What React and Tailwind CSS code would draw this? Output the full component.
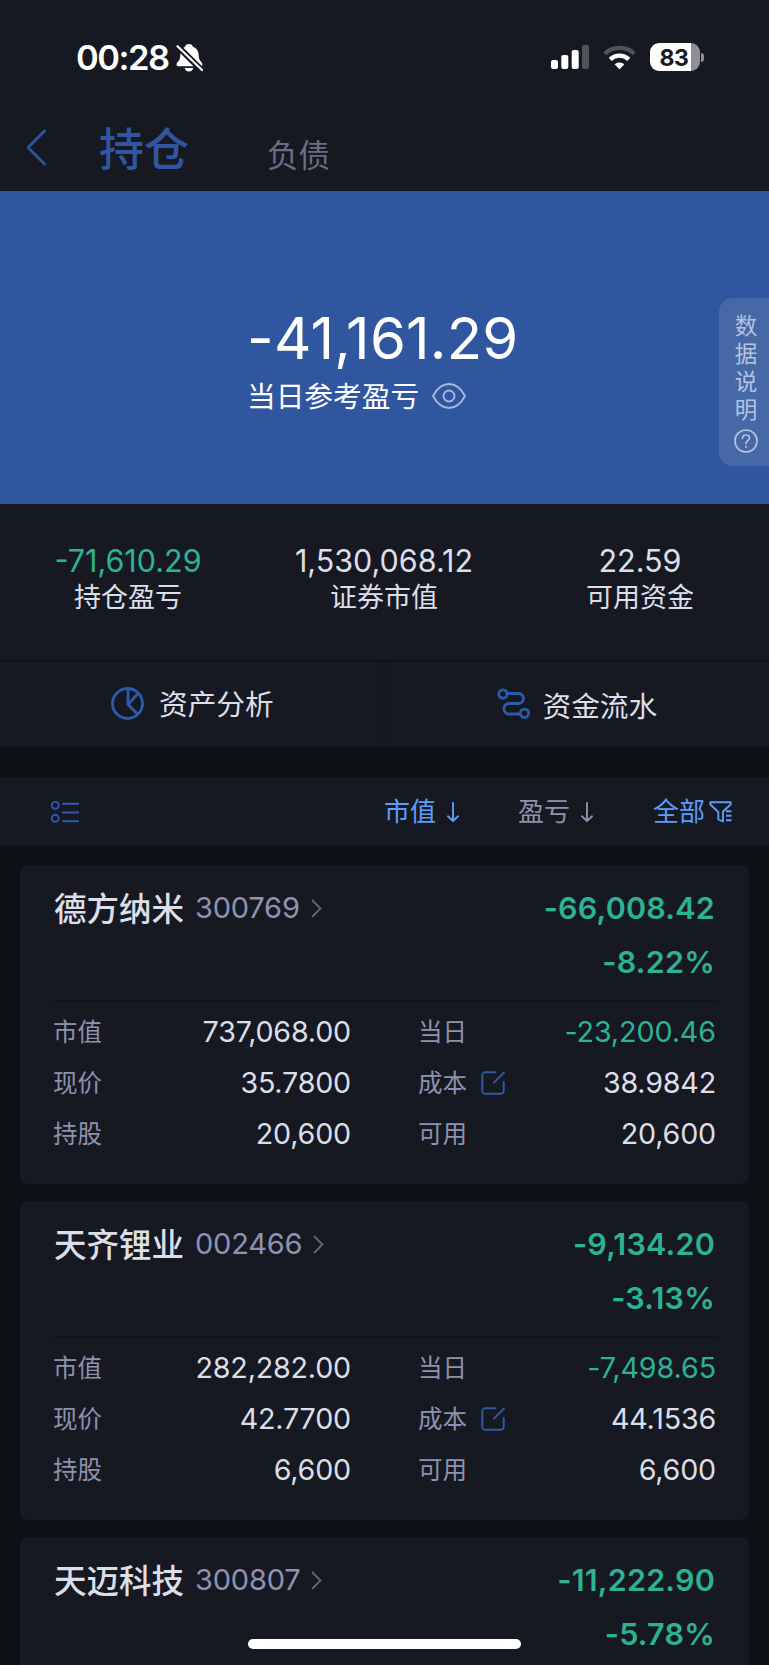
const summary = [
    { label: '持仓盈亏', value: '-71,610.29', down: true },
    { label: '证券市值', value: '1,530,068.12' },
    { label: '可用资金', value: '22.59' },
];

const holdings = [
    {
        name: '德方纳米', code: '300769', profit: '-66,008.42', rate: '-8.22%',
        details: { marketValue: '737,068.00', today: '-23,200.46', price: '35.7800', cost: '38.9842', shares: '20,600', usable: '20,600' },
    },
    {
        name: '天齐锂业', code: '002466', profit: '-9,134.20', rate: '-3.13%',
        details: { marketValue: '282,282.00', today: '-7,498.65', price: '42.7700', cost: '44.1536', shares: '6,600', usable: '6,600' },
    },
    { name: '天迈科技', code: '300807', profit: '-11,222.90', rate: '-5.78%' },
];

const StatusBar = () => (
    <div className="flex h-[104px] items-start pl-[76px] pr-[65px] pt-[43px] text-white">
        <span className="h-[28px] w-[93px] text-[34.5px] font-semibold leading-[29px] tracking-[-1.5px]">00:28</span>
        <svg className="ml-[7px] mt-px h-[28px] w-[27px]" viewBox="0 0 27 28" fill="currentColor">
            <path d="M13 0c2.200 0 3.700 1.300 4 2.800 3.700 1.200 5.500 4.300 5.700 8.500.1 3 .7 5 3 7.200.5.600.8 1.200.8 2 0 1.100-.8 1.700-2 1.700H2.500C1.300 22.200.5 21.600.5 20.500c0-.8.300-1.400.8-2 2.300-2.200 2.900-4.200 3-7.200.2-4.200 2-7.300 4.700-8.500C9.300 1.300 10.800 0 13 0ZM8.700 24h8.600c-.5 2.300-2.300 3.600-4.300 3.600S9.200 26.300 8.700 24Z" />
            <path d="M1.500 2.200 26 26.500" stroke="#161922" strokeWidth="6" />
            <path d="M1.500 2.200 26 26" stroke="currentColor" strokeWidth="2.200" strokeLinecap="round" />
        </svg>
        <svg className="ml-auto mt-[2px] h-[24px] w-[38px]" viewBox="0 0 38 24" fill="currentColor">
            <rect x="0" y="15" width="7" height="9" rx="2" />
            <rect x="10.300" y="10" width="7" height="14" rx="2" />
            <rect x="20.700" y="5" width="7" height="19" rx="2" />
            <rect x="31" y="0" width="7" height="24" rx="2" opacity="0.25" />
        </svg>
        <svg className="ml-[14px] mt-[2px] h-[25px] w-[33px]" viewBox="0 0 33 25" fill="none" stroke="currentColor" strokeWidth="4.300">
            <path d="M1.800 8.700a21.500 21.500 0 0 1 29.400 0" opacity="0.250" />
            <path d="M7.200 14.400a13.600 13.600 0 0 1 18.600 0" />
            <path d="M11.600 19.300a7.200 7.200 0 0 1 9.800 0L16.500 24.300Z" fill="currentColor" stroke="none" />
        </svg>
        <div className="ml-[14px] flex items-center">
            <div className="flex h-[28px] w-[50px] items-center justify-center rounded-[9px] bg-linear-to-r from-white from-[82%] to-[#8e9096] to-[82%]">
                <span className="mr-[2px] mt-px text-[23px] font-bold leading-[28px] tracking-[-0.3px] text-[#161922]">83</span>
            </div>
            <div className="ml-px h-[9px] w-[3px] rounded-r-full bg-[#8e9096]" />
        </div>
    </div>
);

const EditIcon = () => (
    <svg className="-mt-[2px] ml-[14px] h-[24px] w-[24px]" viewBox="0 0 24 24" fill="none" stroke="#30599f" strokeWidth="2" strokeLinecap="round">
        <path d="M14.500 1.300H4A2.700 2.700 0 0 0 1.300 4v16A2.700 2.700 0 0 0 4 22.700h16a2.700 2.700 0 0 0 2.700-2.700V11M23 1.500 13 11.500" />
    </svg>
);

const Field = ({ label, value, down, editable }) => (
    <div className="flex h-[51px] items-center">
        <span className="text-[24.5px] text-[#8f92ae]">{label}</span>
        {editable && <EditIcon />}
        <span className={`-mt-[2px] ml-auto text-[28.7px] ${down ? 'tracking-[-0.1px] text-[#2cb294]' : 'tracking-[-0.2px] text-[#dcdee8]'}`}>{value}</span>
    </div>
);

const HoldingCard = ({ item }) => (
    <div className="mx-[20px] mb-[17px] h-[319px] shrink-0 overflow-hidden rounded-[8px] bg-[#161922] px-[33px]">
        <div className="flex h-[137px] items-start border-b-2 border-[#10131a] pt-[18px]">
            <span className="ml-px mt-[2px] text-[32.5px] font-medium leading-[50px] text-[#dcdee8]">{item.name}</span>
            <span className="ml-[11px] text-[29px] leading-[50px] tracking-[-0.2px] text-[#8f92b2]">{item.code}</span>
            <svg className="ml-[11px] mt-[16px] h-[19px] w-[11px]" viewBox="0 0 11 19" fill="none" stroke="#62657f" strokeWidth="1.800">
                <path d="m1 1 8.500 8.500L1 18" />
            </svg>
            <div className="ml-auto mr-px text-right text-[30.5px] font-semibold tracking-[0.2px] text-[#2cb294]">
                <div className="leading-[50px]">{item.profit}</div>
                <div className="mt-[4px] leading-[50px]">{item.rate}</div>
            </div>
        </div>
        {item.details && (
            <div className="grid grid-cols-[298px_298px] justify-between pt-[5px]">
                <Field label="市值" value={item.details.marketValue} />
                <Field label="当日" value={item.details.today} down />
                <Field label="现价" value={item.details.price} />
                <Field label="成本" value={item.details.cost} editable />
                <Field label="持股" value={item.details.shares} />
                <Field label="可用" value={item.details.usable} />
            </div>
        )}
    </div>
);

const SortArrow = () => (
    <svg className="h-[20px] w-[12px]" viewBox="0 0 12 20" fill="none" stroke="currentColor" strokeWidth="1.900" strokeLinecap="round" strokeLinejoin="round">
        <path d="M6 1v18M1 14.300 6 19l5-4.700" />
    </svg>
);

export default function App() {
    return (
        <div className="relative flex h-[1665px] w-[769px] flex-col overflow-hidden bg-[#0d1014] font-['Inter','Noto_Sans_CJK_SC',sans-serif]">
            <header className="h-[191px] shrink-0 bg-[#161922]">
                <StatusBar />
                <div className="flex h-[87px] items-start">
                    <svg className="ml-[26px] mt-[25px] h-[37px] w-[20px]" viewBox="0 0 20 37" fill="none" stroke="#30569f" strokeWidth="2.600" strokeLinecap="round" strokeLinejoin="round">
                        <path d="M18.500 2 2 18.500l16.500 16.500" />
                    </svg>
                    <span className="ml-[53px] mt-[16px] text-[45px] font-medium leading-[60px] text-[#30569f]">持仓</span>
                    <span className="ml-[78px] mt-[32px] text-[31.5px] leading-[40px] text-[#686f83]">负债</span>
                </div>
            </header>

            <section className="flex h-[313px] shrink-0 justify-center bg-[#30569f] text-white">
                <div className="w-[275px] pt-[112px]">
                    <div className="text-[58px] leading-[70px] tracking-[0.2px]">-41,161.29</div>
                    <div className="mt-[4px] flex items-center">
                        <span className="text-[28.700px] leading-[40px]">当日参考盈亏</span>
                        <svg className="-mt-[2px] ml-[13px] h-[26px] w-[34px]" viewBox="0 0 34 26" fill="none" stroke="#a9bad9" strokeWidth="1.800">
                            <path d="M1 13C5 5.500 10.500 1 17 1s12 4.500 16 12c-4 7.500-9.500 12-16 12S5 20.500 1 13Z" strokeLinejoin="round" />
                            <circle cx="17" cy="13" r="5.500" />
                        </svg>
                    </div>
                </div>
            </section>

            {/* side tab floating over the banner */}
            <div className="absolute right-0 top-[298px] flex h-[168px] w-[50px] flex-col items-center rounded-l-[14px] bg-[#4668a6] pl-[4px] pt-[14px] text-[22.500px] leading-[28px] text-[#b5c3df]">
                <span>数</span>
                <span>据</span>
                <span>说</span>
                <span>明</span>
                <svg className="mt-[5px] h-[24px] w-[24px]" viewBox="0 0 24 24" fill="none" stroke="currentColor" strokeWidth="1.700" strokeLinecap="round">
                    <circle cx="12" cy="12" r="11" />
                    <path d="M8.500 9.300c0-2 1.500-3.300 3.500-3.300s3.500 1.300 3.500 3.100c0 2.300-3.500 2.600-3.500 5.400" />
                    <path d="M12 17.800v.2" strokeWidth="2" />
                </svg>
            </div>

            <section className="grid h-[158px] shrink-0 grid-cols-3 border-b-2 border-[#10131a] bg-[#161922] pr-px pt-[38px] text-center text-[#dcdee8]">
                {summary.map((s) => (
                    <div key={s.label}>
                        <div className={`text-[30.500px] leading-[38px] ${s.down ? 'text-[#2cb294]' : ''}`}>{s.value}</div>
                        <div className="text-[27px] leading-[36px]">{s.label}</div>
                    </div>
                ))}
            </section>

            <section className="grid h-[85px] shrink-0 grid-cols-2 bg-[#161922] text-[28.700px] text-[#dcdee8]">
                <div className="flex items-start border-r-2 border-[#12151c] pl-[111px] pt-[24px]">
                    <svg className="mt-px h-[33px] w-[33px]" viewBox="0 0 33 33" fill="none" stroke="#2e5aac" strokeWidth="2.800" strokeLinecap="round" strokeLinejoin="round">
                        <circle cx="16.500" cy="16.500" r="15" />
                        <path d="M17 2v15.500L27 6.500M17 17.500l9.500 9.500" />
                    </svg>
                    <span className="ml-[15px] mt-px leading-[36px]">资产分析</span>
                </div>
                <div className="flex items-start pl-[112px] pt-[26px]">
                    <svg className="h-[31px] w-[34px]" viewBox="0 0 34 31" fill="none" stroke="#2e5aac" strokeWidth="2.800" strokeLinecap="round">
                        <circle cx="6" cy="6" r="4.200" />
                        <circle cx="27.500" cy="25.300" r="4.200" />
                        <path d="M10.500 5.500H21.500a5 5 0 0 1 0 10H11.500a5.300 5.300 0 0 0 0 10.500H23" />
                    </svg>
                    <span className="ml-[12px] mt-px leading-[36px]">资金流水</span>
                </div>
            </section>

            <section className="mb-[19px] mt-[30px] flex h-[69px] shrink-0 items-center bg-[#161922] text-[26px] text-[#5c9dfc]">
                <svg className="ml-[51px] h-[22px] w-[28px]" viewBox="0 0 28 22" fill="none" stroke="#2e5aac" strokeWidth="1.900">
                    <circle cx="4.300" cy="4.300" r="3.500" />
                    <circle cx="4.300" cy="17.300" r="3.500" />
                    <path d="M11 2.700h17M11 11.500h17M11 20.200h17" />
                </svg>
                <div className="ml-[305px] flex items-center gap-[11px]">
                    <span>市值</span>
                    <SortArrow />
                </div>
                <div className="ml-[59px] flex items-center gap-[11px] text-[#8f92ae]">
                    <span>盈亏</span>
                    <SortArrow />
                </div>
                <div className="ml-[60px] flex items-center gap-[4px]">
                    <span>全部</span>
                    <svg className="h-[22px] w-[23px]" viewBox="0 0 23 22" fill="none" stroke="currentColor" strokeWidth="1.900" strokeLinejoin="round">
                        <path d="M14 20.500 9.300 18.500V11L1.300 3.500V1.300h20.400v2.200L14 10.500ZM17 10.300h5.500M17 14.800h5.500M17 19.300h5.500" />
                    </svg>
                </div>
            </section>

            {holdings.map((item) => (
                <HoldingCard key={item.code} item={item} />
            ))}

            <div className="absolute bottom-[16px] left-[248px] h-[10px] w-[273px] rounded-full bg-white" />
        </div>
    );
}
